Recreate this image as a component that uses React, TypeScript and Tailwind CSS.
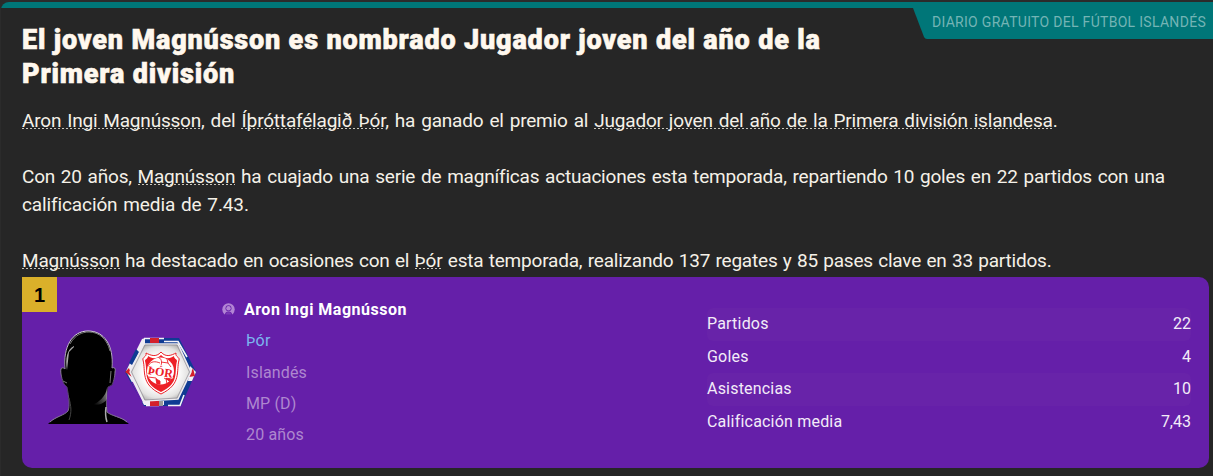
import type { ReactNode } from "react";

interface Stat {
  label: string;
  value: string;
}

const stats: Stat[] = [
  { label: "Partidos", value: "22" },
  { label: "Goles", value: "4" },
  { label: "Asistencias", value: "10" },
  { label: "Calificación media", value: "7,43" },
];

function Term({ children }: { children: ReactNode }) {
  return (
    <span className="bg-[repeating-linear-gradient(90deg,#c9c6bd_0_2px,transparent_2px_4px)] bg-[length:100%_1px] bg-[position:0_19px] bg-no-repeat">
      {children}
    </span>
  );
}

function Portrait() {
  return (
    <svg width="84" height="94" viewBox="0 0 84 94">
      <defs>
        <linearGradient id="rim" x1="0" y1="0" x2="0" y2="1">
          <stop offset="0" stopColor="#e0dce6" />
          <stop offset="0.45" stopColor="#8d8398" />
          <stop offset="0.6" stopColor="#4a3560" />
          <stop offset="1" stopColor="#8d8398" />
        </linearGradient>
        <linearGradient id="jaw" x1="1" y1="0" x2="0" y2="0.7">
          <stop offset="0" stopColor="#999" />
          <stop offset="1" stopColor="#888" stopOpacity="0" />
        </linearGradient>
        <filter id="soft" x="-30%" y="-30%" width="160%" height="160%">
          <feGaussianBlur stdDeviation="0.7" />
        </filter>
      </defs>
      <path
        d="M1 94 C8 87 18 85 21 81 C23 76 22 68 20 57 L17 54 C15 50 13 42 14 39 C15 37 17 38 18 39 C16 17 25 1 41 1 C57 1 67 15 65 38 C67 37 69 38 68 42 C68 47 66 53 65 55 L61 57 C59 65 59 75 60 82 C64 86 75 87 82 94 Z"
        fill="#000"
      />
      <path
        d="M3 92 C8 87 18 85 21 81 C23 76 22 68 20 57 L17 54 C15 50 13 42 14 39 C15 37 17 38 18 39 C16 17 25 1 41 1 C57 1 67 15 65 38 C67 37 69 38 68 42 C68 47 66 53 65 55 L61 57 C59 65 59 75 60 82 C64 86 75 87 80 92"
        fill="none"
        stroke="url(#rim)"
        strokeWidth="1"
      />
      <g filter="url(#soft)" fill="none">
        <path d="M27 16 C20 19 18 29 20 40 L22 22 L27 17" fill="#aaa" />
        <path d="M23 14 C28 5 35 2 42 2 C52 2 60 9 63 21" stroke="#777" strokeWidth="1" />
        <path d="M44 75 C52 73 59 66 60 58 L60 69 C57 74 52 75 44 75" fill="url(#jaw)" />
        <path d="M59 77 C58 84 59 89 60 92" stroke="#aaa" strokeWidth="1.5" />
        <path d="M22 90 C25 82 24 76 22 68" stroke="#444" strokeWidth="1" />
        <path d="M64 41 L63 53 M16 51 L20 53" stroke="#777" strokeWidth="1" />
      </g>
    </svg>
  );
}

function ClubBadge() {
  return (
    <svg width="74" height="72" viewBox="0 0 74 72">
      <defs>
        <radialGradient id="plate" r="0.56">
          <stop offset="0.5" stopColor="#fff" />
          <stop offset="0.8" stopColor="#e4e3e2" />
          <stop offset="1" stopColor="#aaa8a6" />
        </radialGradient>
        <clipPath id="ball">
          <circle cx="36.5" cy="35" r="13.5" />
        </clipPath>
      </defs>
      <path d="M20 2 H55 L72 36 L57 70 H20 L1 36 Z" fill="#0f3b93" />
      <path d="M18 3 L2 35 L20 69 H40 V65 H22 L6 36 L21 8 V2 Z" fill="#f1edf4" />
      <path d="M12 13 L5 27 L8 29 L15 16 Z" fill="#0f3b93" />
      <path d="M8 46 L18 66" stroke="#651fa9" strokeWidth="1.6" />
      <path d="M20 2.5 H40 M40 5.5 H54 L63 21 M22 69.5 H35 M44 69.5 H56 L60 59" stroke="#f4f1f6" strokeWidth="1.6" fill="none" />
      <path d="M66 30 L72 36 L68 45 H64 Z" fill="#f4f1f6" />
      <path d="M26 2 H35 V7 H26 Z M26 65 H35 V70 H26 Z M1 36 L5 32 L8 41 Z M65 41 L69 32 L71 40 Z" fill="#d3202c" />
      <path d="M35 65 H39 V70 H35 Z" fill="#999" />
      <path d="M20 8 H54 L67 36 L54 63 L20 65 L6 36 Z" fill="url(#plate)" stroke="#eeecf0" strokeWidth="1.4" />
      <path d="M21 9 H53 L65.5 36 L53 62 L21 64 L7.5 36 Z" fill="none" stroke="#8d8994" strokeWidth="0.7" />
      <path
        d="M37 16 C32 22 26 19 22 17 C23 21 18 21 19 24 C22 35 16 48 37 58 C58 48 52 35 55 24 C56 21 51 21 52 17 C48 19 42 22 37 16 Z"
        fill="#fff"
        stroke="#ed2027"
        strokeWidth="1"
      />
      <path
        d="M37 19 C32 24 27 22 24 20 C24 23 21 23 21 25 C24 36 18 47 37 56 C56 47 50 36 53 25 C53 23 50 23 50 20 C47 22 42 24 37 19 Z"
        fill="#ed2027"
      />
      <circle cx="36.5" cy="35" r="13.5" fill="#fff" />
      <g clipPath="url(#ball)" stroke="#ed2027" strokeWidth="0.9" fill="none">
        <path d="M33 21 C38 22 38 26 37 30 M37 26 L44 27 L47 31 M44 27 L43 23 M24 30 C27 25 31 25 36 27 M24 41 L32 42 L35 49 M40 42 L48 46 M42 42 L43 49" />
        <path d="M32 43 L36 45 V49 H33 Z M42 42 L48 43 L46 46 Z" fill="#ed2027" />
      </g>
      <text
        x="36.5"
        y="40"
        textAnchor="middle"
        transform="rotate(9 37 36)"
        stroke="#fff"
        strokeWidth="1"
        paintOrder="stroke"
        className="font-['Liberation_Serif',serif] text-[12px] font-bold"
        fill="#ed2027"
      >
        ÞÓR
      </text>
    </svg>
  );
}

function UserIcon() {
  return (
    <svg width="13" height="13" viewBox="0 0 13 13" className="shrink-0">
      <circle cx="6.5" cy="6.5" r="6.2" fill="#b285d4" />
      <circle cx="6.5" cy="5.2" r="3" fill="#651fa9" />
      <path d="M2.8 13 C2.8 9.6 4.3 8.6 6.5 8.6 C8.7 8.6 10.2 9.6 10.2 13 Z" fill="#651fa9" />
      <circle cx="6.5" cy="5.2" r="2.2" fill="#b285d4" />
      <path d="M3.8 11.6 C4 9.8 5 9.2 6.5 9.2 C8 9.2 9 9.8 9.2 11.6 Z" fill="#7a38b6" />
    </svg>
  );
}

export default function App() {
  return (
    <div className="h-[476px] w-[1213px] overflow-hidden bg-[#2b2b2b] pt-[2px] pl-px font-[Roboto,'Liberation_Sans',sans-serif]">
      <article className="h-full overflow-hidden rounded-tl-lg bg-[#262626]">
        <div className="h-[6px] bg-[#007678]" />
        <div className="flex h-[97px] items-start justify-between pl-[21px]">
          <h1 className="pt-[15px] text-[27px] leading-[34px] font-black tracking-[0.83px] whitespace-nowrap text-[#fff8ee] [-webkit-text-stroke:0.6px_#fff8ee]">
            <span className="block">El joven Magnússon es nombrado Jugador joven del año de la</span>
            <span className="block">Primera división</span>
          </h1>
          <div className="relative flex h-[31px] w-[300px] items-center justify-end pr-[7px]">
            <svg className="absolute inset-0" width="300" height="31" viewBox="0 0 300 31">
              <path d="M0 0 L11 29 Q12 31 14 31 H300 V0 Z" fill="#007678" />
            </svg>
            <span className="relative pb-[2px] text-[14px] tracking-[0.3px] whitespace-nowrap text-[#74b4b5]">
              DIARIO GRATUITO DEL FÚTBOL ISLANDÉS
            </span>
          </div>
        </div>

        <div className="flex flex-col gap-7 pt-[2px] pl-[21px] text-[19px] leading-[28px] tracking-[-0.2px] whitespace-nowrap text-[#f5f1e8]">
          <p className="[word-spacing:1.5px]">
            <Term>Aron Ingi Magnússon</Term>, del <Term>Íþróttafélagið Þór</Term>, ha ganado el premio al{" "}
            <Term>Jugador joven del año de la Primera división islandesa</Term>.
          </p>
          <p className="[word-spacing:1.25px]">
            <span className="block">
              Con 20 años, <Term>Magnússon</Term> ha cuajado una serie de magníficas actuaciones esta temporada,
              repartiendo 10 goles en 22 partidos con una
            </span>
            <span className="block tracking-[-0.12px]">calificación media de 7.43.</span>
          </p>
          <p className="[word-spacing:0.8px]">
            <Term>Magnússon</Term> ha destacado en ocasiones con el <Term>Þór</Term> esta temporada, realizando 137
            regates y 85 pases clave en 33 partidos.
          </p>
        </div>

        <section className="mt-[2px] ml-[21px] flex h-[191px] w-[1187px] overflow-hidden rounded-r-[10px] rounded-bl-[10px] bg-[#651fa9]">
          <div className="w-[200px]">
            <div className="flex size-[35px] items-center justify-center bg-[#dab02a] pt-px font-['Liberation_Sans',sans-serif] text-[20px] font-bold text-black">
              1
            </div>
            <div className="flex items-start pt-[18px] pl-[25px]">
              <Portrait />
              <div className="-ml-[7px] pt-[6px]">
                <ClubBadge />
              </div>
            </div>
          </div>

          <div className="flex w-[485px] flex-col pt-[17px] text-[16px] leading-[31.3px] tracking-[0.15px] text-[#ae87cf]">
            <div className="flex items-center gap-[9px] font-bold text-white">
              <UserIcon />
              <span className="tracking-[0.5px]">Aron Ingi Magnússon</span>
            </div>
            <div className="pl-6 text-[#7cb5f0]">Þór</div>
            <div className="pl-6">Islandés</div>
            <div className="pl-6">MP (D)</div>
            <div className="pl-6">20 años</div>
          </div>

          <div className="flex w-[484px] flex-col pt-[31px] text-[16px] text-[#f3ecf8]">
            {stats.map((stat) => (
              <div
                key={stat.label}
                className="flex h-[32.6px] items-center justify-between rounded-md odd:bg-[#6823a9]"
              >
                <span className="tracking-[0.2px]">{stat.label}</span>
                <span>{stat.value}</span>
              </div>
            ))}
          </div>
        </section>
      </article>
    </div>
  );
}
